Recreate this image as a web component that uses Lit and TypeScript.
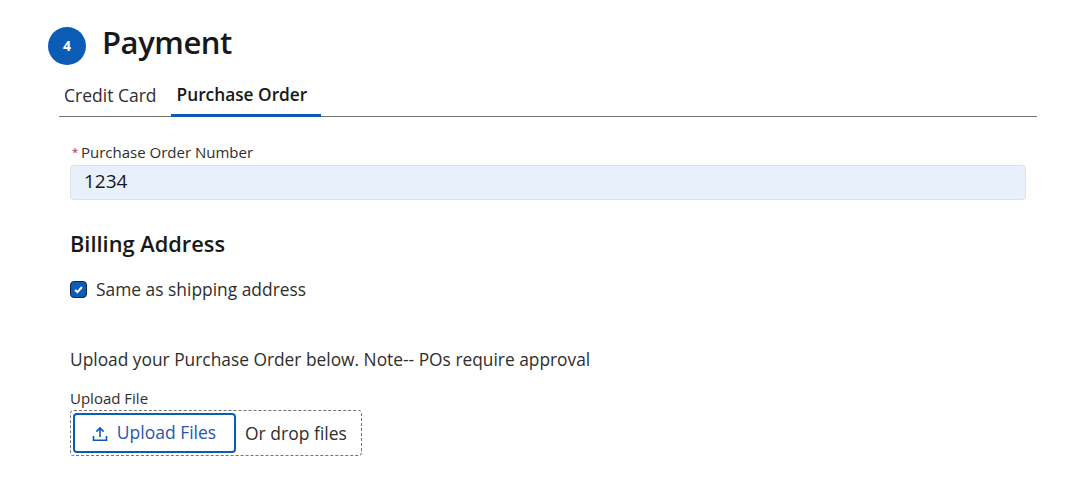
import { LitElement, html, css } from "lit";
import { customElement } from "lit/decorators.js";

@customElement("app-root")
export class AppRoot extends LitElement {
  static styles = css`
    :host { display: block; font-family: "Open Sans", "Noto Sans", sans-serif; color: #181818; width: 1068px; height: 481px; overflow: hidden; }
    .page { padding: 27px 31px 0 48px; display: flex; flex-direction: column; }
    .head { display: flex; align-items: center; gap: 17px; height: 38px; }
    .num { width: 38px; height: 38px; box-sizing: border-box; padding-bottom: 1px; border-radius: 50%; background: #0b5cb5; color: #fff; display: flex; align-items: center; justify-content: center; font-size: 14px; font-weight: 700; }
    .title { font-size: 31px; font-weight: 600; line-height: 32px; color: #181818; letter-spacing: -0.45px; padding-bottom: 8px; margin-left: -1px; }
    .tabs { margin: 11px 0 0 11px; display: flex; border-bottom: 1px solid #747474; height: 40px; }
    .tab { font-size: 17.5px; line-height: 38px; padding: 0 14px 0 5px; color: #2e2e2e; }
    .tab.on { font-size: 17.3px; font-weight: 600; color: #181818; padding: 0 14px 0 6px; border-bottom: 3px solid #0b5cb5; height: 38px; margin-bottom: -1px; }
    .form { padding: 25px 11px 0 22px; display: flex; flex-direction: column; }
    .lbl { font-size: 15px; line-height: 20px; color: #2e2e2e; display: flex; gap: 3px; padding-left: 2px; }
    .req { color: #a8283c; font-size: 11px; width: 6px; }
    .input { height: 35px; box-sizing: border-box; margin-top: 3px; background: #e8f0fb; border: 1px solid #dcdfe6; border-radius: 4px; padding: 0 13px; font-size: 19px; line-height: 31px; color: #181818; }
    h2 { font-size: 21.8px; font-weight: 600; line-height: 26px; margin: 31px 0 0; color: #181818; }
    .check { display: flex; align-items: center; gap: 9px; margin-top: 20px; font-size: 17.4px; line-height: 24px; color: #2e2e2e; }
    .box { width: 17px; height: 17px; box-sizing: border-box; margin-top: 1px; border-radius: 4px; background: #0b5cb5; border: 1px solid #0b2545; display: flex; align-items: center; justify-content: center; }
    .note { font-size: 17.35px; line-height: 24px; margin-top: 46px; color: #2e2e2e; }
    .lbl2 { font-size: 15px; line-height: 20px; margin-top: 17px; color: #2e2e2e; }
    .drop { width: 292px; height: 46px; box-sizing: border-box; margin-top: 2px; border: 1px dashed #747474; border-radius: 4px; display: flex; align-items: center; padding-left: 2px; gap: 9px; font-size: 17.5px; color: #2e2e2e; }
    .btn { width: 163px; height: 40px; box-sizing: border-box; border: 2px solid #0b5cb5; border-radius: 4px; display: flex; align-items: center; justify-content: center; gap: 9px; color: #2a55b0; font-size: 17.5px; padding: 0 1px 2px 0; }
    .btn svg { margin-top: 3px; }
    svg { display: block; }
  `;
  render() {
    return html`<div class="page">
      <div class="head"><div class="num">4</div><div class="title">Payment</div></div>
      <div class="tabs"><div class="tab">Credit Card</div><div class="tab on">Purchase Order</div></div>
      <div class="form">
        <div class="lbl"><span class="req">*</span><span>Purchase Order Number</span></div>
        <div class="input">1234</div>
        <h2>Billing Address</h2>
        <div class="check"><span class="box"><svg width="11" height="11" viewBox="0 0 11 11"><path d="M2 6l2.4 2.2L9 3" fill="none" stroke="#fff" stroke-width="2"/></svg></span>Same as shipping address</div>
        <div class="note">Upload your Purchase Order below. Note-- POs require approval</div>
        <div class="lbl2">Upload File</div>
        <div class="drop">
          <div class="btn"><svg width="16" height="16" viewBox="0 0 16 16" fill="none" stroke="#0b5cb5" stroke-width="1.6"><path d="M1.5 10v4.2h13V10M8 11V2.2M4.4 5.6L8 2l3.6 3.6"/></svg>Upload Files</div>
          <span>Or drop files</span>
        </div>
      </div>
    </div>`;
  }
}
